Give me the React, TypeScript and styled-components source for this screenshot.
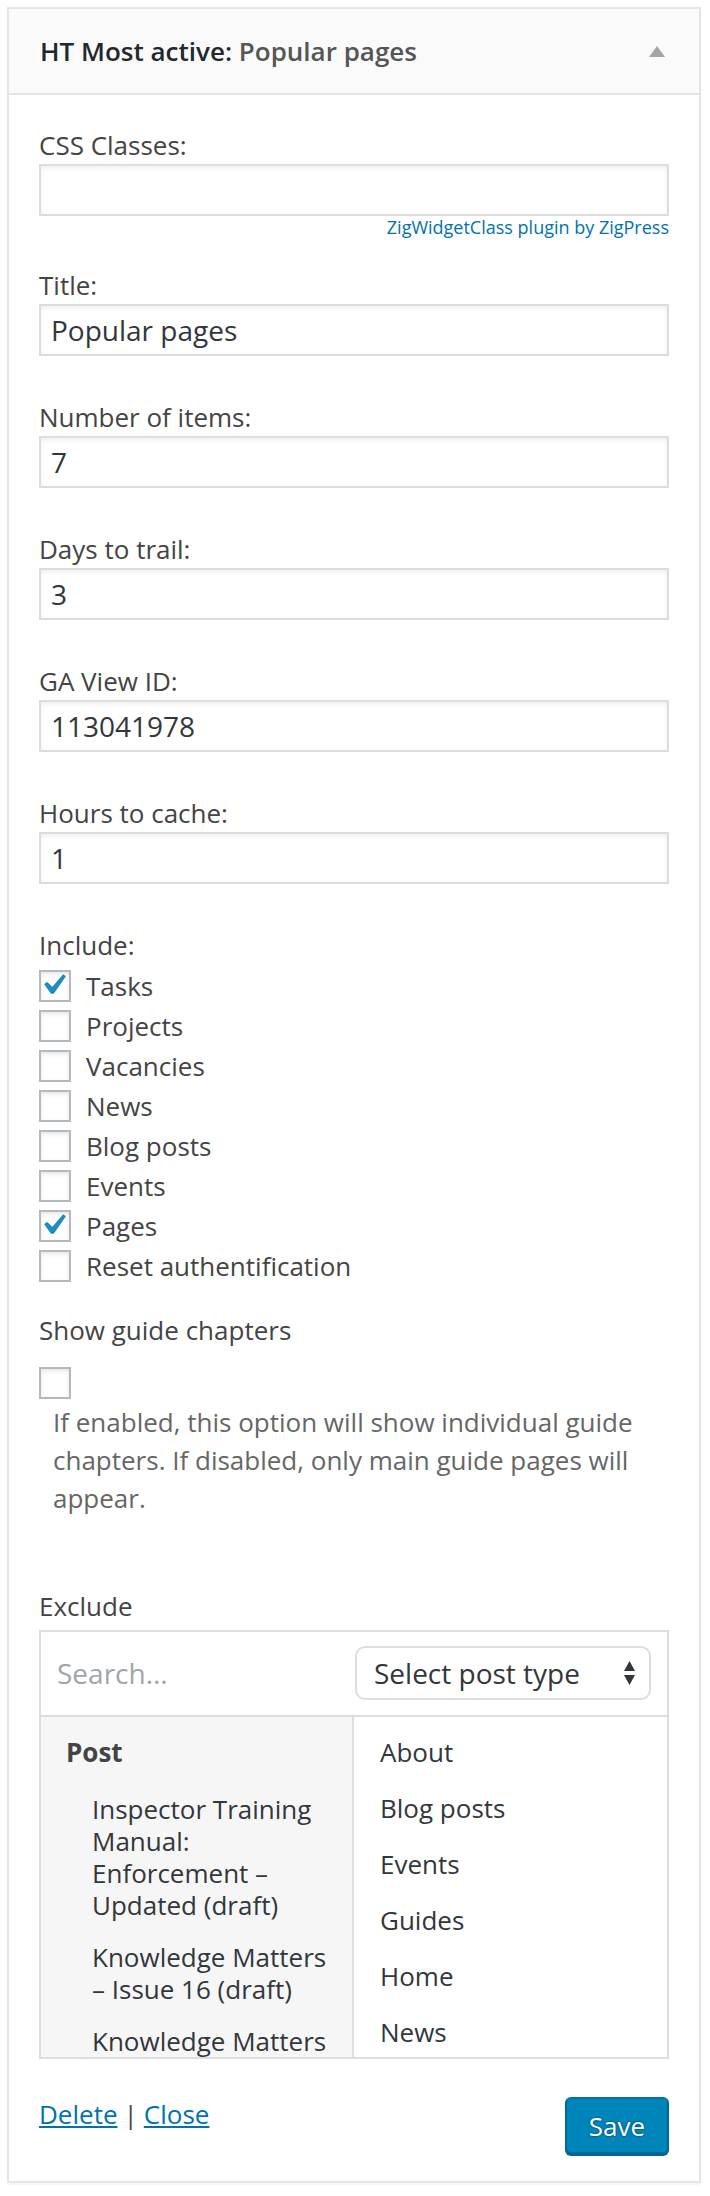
import styled, { createGlobalStyle } from "styled-components";

// WordPress widget form, captured at 2x
const textColor = "#444";
const darkText = "#32373c";
const linkColor = "#0073aa";
const borderColor = "#ddd";
const widgetBorder = "#e5e5e5";

const GlobalStyle = createGlobalStyle`
  html, body {
    margin: 0;
    padding: 0;
    background: #fff;
  }
  body {
    font-family: "Open Sans", "Liberation Sans", sans-serif;
    color: ${textColor};
  }
  * {
    box-sizing: border-box;
  }
`;

const Widget = styled.div`
  margin: 7px 9px 6px 7px;
  border: 2px solid ${widgetBorder};
  background: #fff;
  box-shadow: 0 2px 2px rgba(0, 0, 0, 0.04);
`;

const WidgetTop = styled.div`
  display: flex;
  align-items: center;
  justify-content: space-between;
  height: 86px;
  padding: 0 34px 0 31px;
  background: #fafafa;
  border-bottom: 2px solid ${widgetBorder};
`;

const WidgetTitle = styled.h3`
  margin: 0;
  font-size: 26px;
  font-weight: 600;
  color: #23282d;
`;

const InTitle = styled.span`
  color: #555;
`;

const WidgetInside = styled.div`
  padding: 31px 30px 27px;
`;

const Field = styled.div`
  margin-bottom: 42px;
`;

const Label = styled.label`
  display: block;
  font-size: 26px;
  line-height: 38px;
  color: ${textColor};
`;

const TextInput = styled.input`
  display: block;
  width: 100%;
  height: 52px;
  margin: 0;
  padding: 0 10px;
  border: 2px solid ${borderColor};
  border-radius: 0;
  background: #fff;
  box-shadow: inset 0 2px 4px rgba(0, 0, 0, 0.07);
  font-family: inherit;
  font-size: 28px;
  color: ${darkText};
  outline: none;
`;

const Hint = styled.div`
  margin-bottom: -14px;
  text-align: right;
  font-size: 18px;
  line-height: 22px;
  color: ${linkColor};
`;

const CheckList = styled.div`
  margin-top: 2px;
`;

const CheckRow = styled.div`
  display: flex;
  align-items: center;
  gap: 15px;
  height: 40px;
  font-size: 26px;
  color: ${textColor};
`;

const Box = styled.span`
  position: relative;
  display: block;
  flex: none;
  width: 32px;
  height: 32px;
  border: 2px solid #b4b9be;
  background: #fff;
  box-shadow: inset 0 2px 4px rgba(0, 0, 0, 0.1);

  svg {
    position: absolute;
    left: -9px;
    top: -8px;
  }
`;

const Section = styled.div`
  margin-top: 25px;
`;

const GuideBox = styled.div`
  margin-top: 18px;
`;

const Description = styled.p`
  margin: 4px 0 0;
  padding-left: 14px;
  font-size: 26px;
  line-height: 38px;
  color: #666;
`;

const ExcludeLabel = styled(Label)`
  margin-top: 70px;
  margin-bottom: 5px;
`;

const Picker = styled.div`
  border: 2px solid ${borderColor};
`;

const PickerHead = styled.div`
  display: flex;
  align-items: center;
  padding: 14px 16px 15px;
  border-bottom: 2px solid ${borderColor};
`;

const Search = styled.input`
  flex: 1;
  min-width: 0;
  border: none;
  padding: 0;
  background: transparent;
  font-family: inherit;
  font-size: 28px;
  color: ${darkText};
  outline: none;

  &::placeholder {
    color: #a0a5aa;
  }
`;

const SelectBox = styled.div`
  display: flex;
  align-items: center;
  justify-content: space-between;
  width: 296px;
  height: 54px;
  padding: 0 14px 0 17px;
  border: 2px solid ${borderColor};
  border-radius: 10px;
  background: #fff;
  font-size: 28px;
  color: ${darkText};
`;

const PickerBody = styled.div`
  display: grid;
  grid-template-columns: 313px 1fr;
  height: 340px;
  overflow: hidden;
`;

const TypeColumn = styled.div`
  padding-top: 10px;
  background: #f6f6f6;
  border-right: 2px solid ${borderColor};
`;

const GroupTitle = styled.div`
  padding: 9px 16px 15px 25px;
  font-size: 26px;
  line-height: 32px;
  font-weight: 700;
  color: ${textColor};
`;

const Item = styled.div<{ $nested?: boolean }>`
  padding: ${(p) => (p.$nested ? "10px 16px 10px 51px" : "12px 16px 12px 26px")};
  font-size: 26px;
  line-height: 32px;
  color: ${darkText};
`;

const PageColumn = styled.div`
  padding-top: 7px;
`;

const Actions = styled.div`
  display: flex;
  align-items: flex-start;
  justify-content: space-between;
  margin-top: 38px;
`;

const Links = styled.div`
  font-size: 26px;
  line-height: 34px;
  color: ${textColor};
`;

const Link = styled.a`
  color: ${linkColor};
  text-decoration: underline;
`;

const Sep = styled.span`
  margin: 0 6px;
`;

const SaveButton = styled.button`
  height: 57px;
  padding: 0 22px;
  border: 2px solid #0073aa;
  border-color: #0073aa #006799 #006799;
  border-radius: 6px;
  background: #0085ba;
  box-shadow: 0 2px 0 #006799;
  font-family: inherit;
  font-size: 26px;
  color: #fff;
  text-shadow: 0 -1px 1px #006799, 1px 0 1px #006799, 0 1px 1px #006799, -1px 0 1px #006799;
`;

const Check = () => (
  <svg width="42" height="42" viewBox="0 0 20 20">
    <path
      fill="#1e8cbe"
      d="M14.83 4.89l1.34.94-5.81 8.38H9.02L5.78 9.67l1.34-1.25 2.57 2.4z"
    />
  </svg>
);

const Checkbox = ({ checked }: { checked?: boolean }) => (
  <Box>{checked && <Check />}</Box>
);

const fields = [
  { label: "Title:", value: "Popular pages" },
  { label: "Number of items:", value: "7" },
  { label: "Days to trail:", value: "3" },
  { label: "GA View ID:", value: "113041978" },
  { label: "Hours to cache:", value: "1" },
];

const includes = [
  { name: "Tasks", checked: true },
  { name: "Projects" },
  { name: "Vacancies" },
  { name: "News" },
  { name: "Blog posts" },
  { name: "Events" },
  { name: "Pages", checked: true },
  { name: "Reset authentification" },
];

const posts = [
  "Inspector Training Manual: Enforcement – Updated (draft)",
  "Knowledge Matters – Issue 16 (draft)",
  "Knowledge Matters – Issue 15 (draft)",
];

const pages = ["About", "Blog posts", "Events", "Guides", "Home", "News", "Projects"];

function App() {
  return (
    <>
      <GlobalStyle />
      <Widget>
        <WidgetTop>
          <WidgetTitle>
            HT Most active: <InTitle>Popular pages</InTitle>
          </WidgetTitle>
          <svg width="16" height="11" viewBox="0 0 16 11">
            <path d="M8 0L16 11H0z" fill="#a0a5aa" />
          </svg>
        </WidgetTop>

        <WidgetInside>
          <Field>
            <Label>CSS Classes:</Label>
            <TextInput readOnly value="" />
            <Hint>ZigWidgetClass plugin by ZigPress</Hint>
          </Field>

          {fields.map((f) => (
            <Field key={f.label}>
              <Label>{f.label}</Label>
              <TextInput readOnly value={f.value} />
            </Field>
          ))}

          <Label>Include:</Label>
          <CheckList>
            {includes.map((i) => (
              <CheckRow key={i.name}>
                <Checkbox checked={i.checked} />
                {i.name}
              </CheckRow>
            ))}
          </CheckList>

          <Section>
            <Label>Show guide chapters</Label>
            <GuideBox>
              <Checkbox />
            </GuideBox>
            <Description>
              If enabled, this option will show individual guide chapters. If
              disabled, only main guide pages will appear.
            </Description>
          </Section>

          <ExcludeLabel>Exclude</ExcludeLabel>
          <Picker>
            <PickerHead>
              <Search placeholder="Search..." />
              <SelectBox>
                Select post type
                <svg width="11" height="24" viewBox="0 0 11 24">
                  <path d="M5.5 0L11 10H0z M0 14H11L5.5 24z" fill={darkText} />
                </svg>
              </SelectBox>
            </PickerHead>
            <PickerBody>
              <TypeColumn>
                <GroupTitle>Post</GroupTitle>
                {posts.map((p) => (
                  <Item $nested key={p}>
                    {p}
                  </Item>
                ))}
              </TypeColumn>
              <PageColumn>
                {pages.map((p) => (
                  <Item key={p}>{p}</Item>
                ))}
              </PageColumn>
            </PickerBody>
          </Picker>

          <Actions>
            <Links>
              <Link href="#">Delete</Link>
              <Sep>|</Sep>
              <Link href="#">Close</Link>
            </Links>
            <SaveButton>Save</SaveButton>
          </Actions>
        </WidgetInside>
      </Widget>
    </>
  );
}

export default App;
